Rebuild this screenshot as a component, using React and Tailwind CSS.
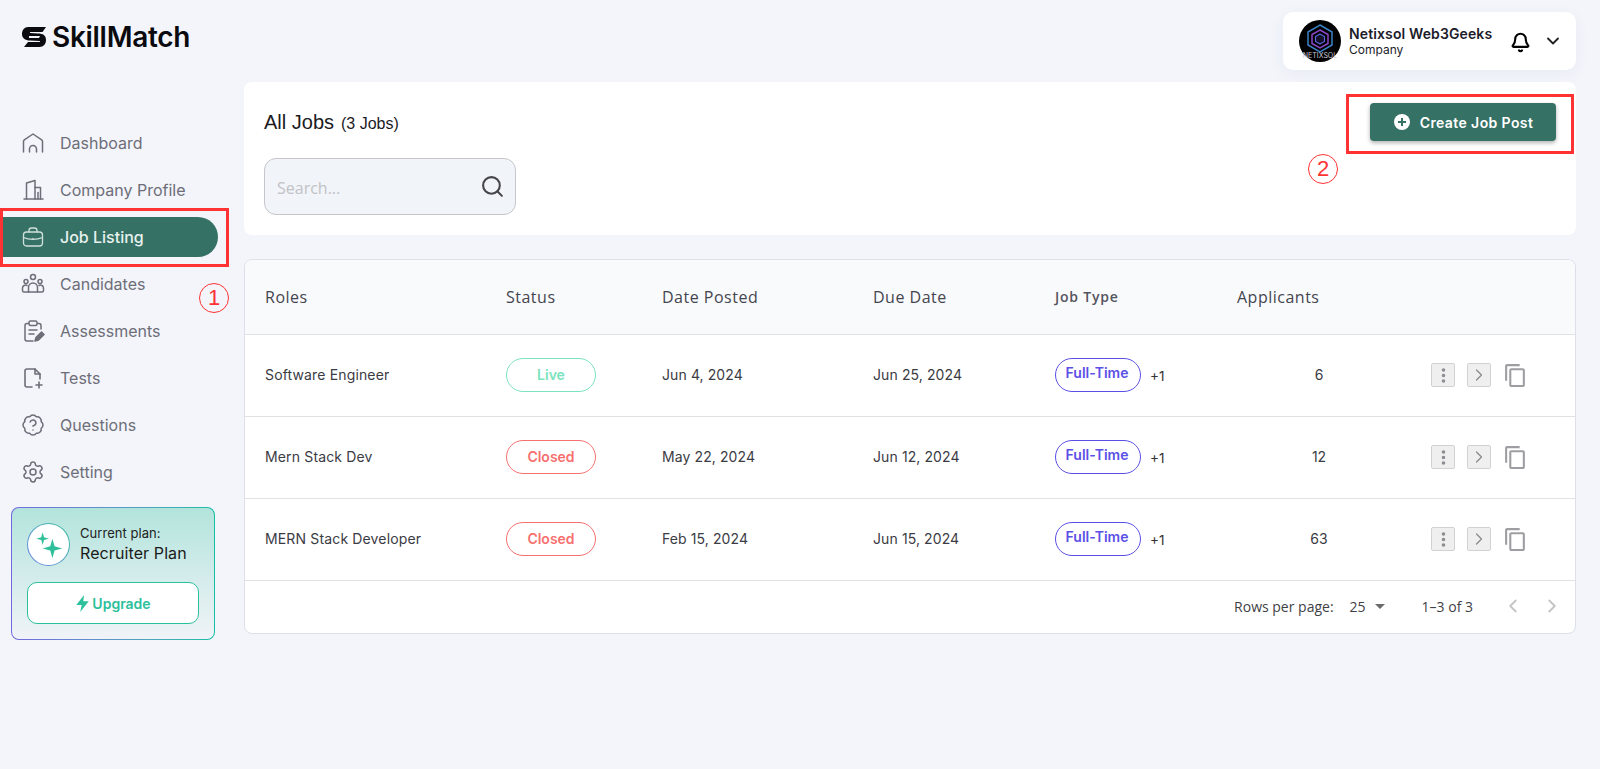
import React from "react";
import { Bell, ChevronDown, Search, ChevronLeft, ChevronRight, Settings, MoreVertical, BadgeQuestionMark } from "lucide-react";

const inter = "font-['Inter',sans-serif]";
const open = "font-['Open_Sans',sans-serif]";

const S = ({ children, className = "", w = 1.5 }) => (
  <svg viewBox="0 0 24 24" fill="none" stroke="currentColor" strokeWidth={w} strokeLinecap="round" strokeLinejoin="round" className={"w-6 h-6 shrink-0 " + className}>{children}</svg>
);

const HomeI = () => <S><path d="M2.500 21V10.500c0-.7.300-1.300.8-1.700L12 3l8.700 5.800c.5.400.8 1 .8 1.700V21" /><path d="M8.500 21v-3a3.500 3.500 0 0 1 7 0v3" /></S>;
const BuildI = () => <S><path d="M3 21h19" /><path d="M5.500 21V5l8.500-2.500V21" /><path d="M14 9.500h5.500V21" /><path d="M17 14.500V21" /></S>;
const CaseI = () => <S w={1.3} className="text-[#cfe0db]"><rect x="2.500" y="7" width="19" height="14" rx="3" /><path d="M8 7V5.500A2.500 2.500 0 0 1 10.500 3h3A2.500 2.500 0 0 1 16 5.500V7" /><path d="M2.500 12.500c5.500 2.500 13.500 2.500 19 0" /><path d="M12 13.500v.5" /></S>;
const PeopleI = () => <S><circle cx="12" cy="5" r="2.500" /><circle cx="5" cy="9.500" r="2" /><circle cx="19" cy="9.500" r="2" /><path d="M7.500 20v-4.500a4.500 4.500 0 0 1 9 0V20z" /><path d="M7.500 20H3a1.500 1.500 0 0 1-1.500-1.500V16a3 3 0 0 1 4.500-2.500" /><path d="M16.500 20H21a1.500 1.500 0 0 0 1.500-1.500V16a3 3 0 0 0-4.500-2.500" /></S>;
const ClipI = () => <S><path d="M16.500 4.500H18a2 2 0 0 1 2 2V10" /><path d="M7.500 4.500H6a2 2 0 0 0-2 2V20a2 2 0 0 0 2 2h6" /><rect x="8" y="2" width="8" height="4.500" rx="1.500" /><path d="M8 11h8M8 15h5" /><path d="M14 22l1-3.500 5.500-5.500 2.500 2.500-5.500 5.500z" fill="currentColor" /></S>;
const FileI = () => <S w={1.6}><path d="M11 21H6a2 2 0 0 1-2-2V5a2 2 0 0 1 2-2h8l5 5v5" /><path d="M14 3v5h5" /><path d="M18 16v6M15 19h6" /></S>;

const nav = [
  ["Dashboard", <HomeI />],
  ["Company Profile", <BuildI />],
  ["Job Listing", <CaseI />, true],
  ["Candidates", <PeopleI />],
  ["Assessments", <ClipI />],
  ["Tests", <FileI />],
  ["Questions", <BadgeQuestionMark size={24} strokeWidth={1.5} className="shrink-0" />],
  ["Setting", <Settings size={24} strokeWidth={1.5} className="shrink-0" />],
];

const rows = [
  ["Software Engineer", "Live", "Jun 4, 2024", "Jun 25, 2024", "6"],
  ["Mern Stack Dev", "Closed", "May 22, 2024", "Jun 12, 2024", "12"],
  ["MERN Stack Developer", "Closed", "Feb 15, 2024", "Jun 15, 2024", "63"],
];

const Logo = () => (
  <svg viewBox="0 0 24 20" className="w-6 h-5 shrink-0">
    <path fill="#0b0b0f" d="M6 0h18l-3.500 5H8.500c-.6 0-.8.700-.3 1L16 6.500c5 0 8 2 8 6.500 0 4-2.500 7-6.500 7H2l4-5h11.500c.7 0 .8-.9.200-1L8 13.500C3 13.500 0 11 0 7c0-4 2.500-7 6-7z" />
    <path fill="#f3f5fb" d="M7 9h11l-1 2H7z" />
  </svg>
);

const Avatar = () => (
  <svg viewBox="0 0 42 42" className="w-[42px] h-[42px] shrink-0">
    <circle cx="21" cy="21" r="21" fill="#000" />
    <path d="M21 5l12 7v13l-12 7-12-7V12z" fill="none" stroke="#3b82c4" strokeWidth="1.500" />
    <path d="M21 10l8 4.500v9L21 28l-8-4.500v-9z" fill="none" stroke="#8b46c8" strokeWidth="1.500" />
    <path d="M21 14l4.500 2.500v5L21 24l-4.500-2.500v-5z" fill="#16122a" stroke="#5a63d8" strokeWidth="1.200" />
    <text x="21" y="38" textAnchor="middle" fontSize="7" fill="#c9c9d6" fontFamily="Inter, sans-serif">NETIXSOL</text>
  </svg>
);

const Sparkles = () => (
  <svg viewBox="0 0 42 42" className="w-[41px] h-[41px]">
    <path fill="#2fbf9a" d="M15 8.500l1.400 5.100 5.100 1.400-5.100 1.400-1.400 5.100-1.400-5.100L8.500 15l5.100-1.400z" />
    <path fill="#2fbf9a" d="M25 15l2.200 7.800L35 25l-7.800 2.200L25 35l-2.200-7.800L15 25l7.800-2.200z" />
  </svg>
);

const Ann = ({ n, className }) => (
  <div className={"absolute w-[30px] h-[30px] rounded-full border border-[#ff3333] text-[#ff3333] flex items-center justify-center text-[22px] leading-none font-['Liberation_Sans',sans-serif] " + className}>{n}</div>
);

export default function App() {
  return (
    <div className={"relative w-full h-[769px] bg-[#f3f5fb] overflow-hidden " + inter}>
      <header className="flex justify-between items-start pt-3 pr-6 pl-[22px] h-[82px]">
        <div className="flex items-center gap-[6px] h-[50px]">
          <Logo />
          <span className="text-[28px] font-semibold tracking-[-0.3px] text-[#0b0b0f] leading-none">SkillMatch</span>
        </div>
        <div className="w-[293px] h-[58px] bg-white rounded-[10px] shadow-[0_4px_16px_rgba(60,60,100,0.05)] flex items-center pl-4 pr-[13px]">
          <Avatar />
          <div className="ml-2 flex-1 pb-[2px]">
            <div className="text-[14px] font-semibold tracking-[0.12px] leading-[18px] text-[#1c1c2b] whitespace-nowrap">Netixsol Web3Geeks</div>
            <div className="text-[12px] leading-[13px] text-[#1c1c2b]">Company</div>
          </div>
          <Bell size={21} strokeWidth={2.4} className="text-black mt-[2px]" />
          <ChevronDown size={20} strokeWidth={2.2} className="text-[#222] ml-3" />
        </div>
      </header>

      <div className="flex">
        <aside className="w-[244px] shrink-0 pt-[41px]">
          <nav className="flex flex-col gap-[7px] pr-[26px]">
            {nav.map(([label, icon, active]) => (
              <div key={label} className={"h-10 flex items-center gap-[15px] pl-[21px] rounded-r-[20px] text-[16px] " + (active ? "bg-[#367165] text-[#e8f2ef] font-medium" : "text-[#6e6e78]")}>
                {icon}
                <span>{label}</span>
              </div>
            ))}
          </nav>
          <div className="ml-[11px] mt-[15px] w-[204px] h-[133px] rounded-[8px] p-px bg-gradient-to-r from-[#7367e0] to-[#12bfa5]">
            <div className="w-full h-full rounded-[7px] bg-gradient-to-b from-[#b2e4dc] to-[#f0f3f8] px-[15px] pt-[15px]">
              <div className="flex items-center gap-[10px]">
                <div className="w-[43px] h-[43px] rounded-full p-px bg-gradient-to-tr from-[#6d7fe8] to-[#2fbf9a] shrink-0">
                  <div className="w-full h-full rounded-full bg-white flex items-center justify-center">
                    <Sparkles />
                  </div>
                </div>
                <div>
                  <div className="text-[13px] tracking-[0.05px] leading-[17px] text-[#222]">Current plan:</div>
                  <div className="text-[16px] tracking-[0.1px] leading-[22px] text-[#1a1a1a]">Recruiter Plan</div>
                </div>
              </div>
              <div className="mt-4 h-[42px] rounded-[10px] bg-white border border-[#2cc09c] flex items-center justify-center gap-[2px] text-[#2cc09c] text-[14px] font-semibold">
                <svg viewBox="0 0 24 24" className="w-[15px] h-[17px] scale-125" fill="currentColor"><path d="M14 1 4 14h7l-2 9 11-14h-7z" /></svg>
                Upgrade
              </div>
            </div>
          </div>
        </aside>

        <main className="w-[1332px] shrink-0">
          <section className="h-[153px] bg-white rounded-[8px] px-[21px] flex justify-between">
            <div>
              <h1 className="mt-[28px] ml-[-1px] h-6 flex items-baseline gap-[7px] text-[#1b1b1f] font-['Liberation_Sans',sans-serif] text-[20px] leading-6">
                All Jobs <span className="text-[16px]">(3 Jobs)</span>
              </h1>
              <div className="mt-6 w-[252px] h-[57px] ml-[-1px] bg-[#f1f4f8] border border-[#c6c6ca] rounded-[12px] flex items-center justify-between pl-3 pr-[10px]">
                <span className={"text-[16px] pt-[2px] text-[#c2c2c6] " + open}>Search...</span>
                <Search size={25} strokeWidth={2} className="text-[#45454d]" />
              </div>
            </div>
            <button className="mt-[21px] mr-[-1px] w-[186px] h-[38px] pl-px bg-[#367165] rounded-[4px] shadow-[0_2px_4px_rgba(0,0,0,0.3)] text-white text-[14px] font-semibold tracking-[0.4px] flex items-center justify-center gap-[10px]">
              <svg viewBox="0 0 16 16" className="w-4 h-4"><circle cx="8" cy="8" r="8" fill="#fff" /><path d="M8 4v8M4 8h8" stroke="#367165" strokeWidth="2" /></svg>
              Create Job Post
            </button>
          </section>

          <section className="mt-6 h-[375px] bg-white rounded-[8px] border border-[#dde0ea] overflow-hidden">
            <table className="w-full table-fixed border-collapse">
              <colgroup>
                <col className="w-[241px]" /><col className="w-[156px]" /><col className="w-[211px]" /><col className="w-[182px]" /><col className="w-[182px]" /><col className="w-[160px]" /><col />
              </colgroup>
              <thead>
                <tr className={"h-[74px] bg-[#f9fafc] border-b border-[#e2e2e6] text-left text-[16px] text-[#45454f] tracking-[0.5px] " + open}>
                  <th className="pl-5 font-medium">Roles</th>
                  <th className="pl-5 font-medium">Status</th>
                  <th className="pl-5 font-medium">Date Posted</th>
                  <th className="pl-5 font-medium">Due Date</th>
                  <th className="pl-5 font-semibold text-[14px] tracking-[0.8px] text-[#55555f]">Job Type</th>
                  <th className="pl-5 font-medium">Applicants</th>
                  <th />
                </tr>
              </thead>
              <tbody>
                {rows.map(([role, status, posted, due, count]) => (
                  <tr key={role} className="h-[82px] border-b border-[#e2e2e6] text-[14px] text-[#3b3b44]">
                    <td className="pl-5 pb-[2px] tracking-[0.15px]">{role}</td>
                    <td className="pl-5">
                      <span className={"w-[90px] h-[34px] pb-[2px] rounded-full border flex items-center justify-center font-semibold text-[14px] " + (status === "Live" ? "border-[#7be3bd] text-[#7be3bd]" : "border-[#f77070] text-[#f77070]")}>{status}</span>
                    </td>
                    <td className="pl-5 pb-[2px] tracking-[0.1px]">{posted}</td>
                    <td className="pl-5 pb-[2px] tracking-[0.1px]">{due}</td>
                    <td className="pl-5">
                      <div className="flex items-center gap-[9px]">
                        <span className="w-[86px] h-[34px] pr-[2px] rounded-full border border-[#5b50e6] text-[#5b50e6] font-semibold flex items-center justify-center pb-[5px]">Full-Time</span>
                        <span className="text-[13.500px] text-[#333] pt-[2px]">+1</span>
                      </div>
                    </td>
                    <td className="pl-[86px] pb-[2px]"><span className="inline-block w-[32px] text-center">{count}</span></td>
                    <td>
                      <div className="flex items-center">
                        <span className="w-6 h-6 bg-[#efefef] border border-[#d2d2d2] rounded-[2px] flex items-center justify-center text-[#8a8a8f] ml-[54px]">
                          <MoreVertical size={19} strokeWidth={2.5} />
                        </span>
                        <span className="w-6 h-6 bg-[#efefef] border border-[#d2d2d2] rounded-[2px] flex items-center justify-center text-[#8a8a8f] ml-3">
                          <ChevronRight size={20} strokeWidth={1.5} />
                        </span>
                        <svg viewBox="0 0 24 24" className="w-[25px] h-[25px] ml-[12px] text-[#9e9ea2]" fill="currentColor"><path d="M16 1H4c-1.100 0-2 .9-2 2v14h2V3h12V1zm3 4H8c-1.100 0-2 .9-2 2v14c0 1.100.9 2 2 2h11c1.100 0 2-.9 2-2V7c0-1.100-.9-2-2-2zm0 16H8V7h11v14z" /></svg>
                      </div>
                    </td>
                  </tr>
                ))}
              </tbody>
            </table>
            <div className={"h-[51px] flex items-center justify-end text-[14px] text-[#3f3f46] pr-[12px] " + open}>
              <span>Rows per page:</span>
              <span className="ml-4">25</span>
              <svg viewBox="0 0 10 5" className="w-[10px] h-[5px] ml-[9px]"><path d="M0 0h10L5 5z" fill="#6b6b6b" /></svg>
              <span className="ml-[37px]">1–3 of 3</span>
              <ChevronLeft size={22} strokeWidth={2} className="text-[#c4c4c4] ml-[29px]" />
              <ChevronRight size={22} strokeWidth={2} className="text-[#c4c4c4] ml-[17px]" />
            </div>
          </section>
        </main>
      </div>

      <div className="absolute left-0 top-[208px] w-[229px] h-[59px] border-[3px] border-[#ff3333]" />
      <div className="absolute left-[1346px] top-[94px] w-[228px] h-[60px] border-[3px] border-[#ff3333]" />
      <Ann n="1" className="left-[199px] top-[283px]" />
      <Ann n="2" className="left-[1308px] top-[154px]" />
    </div>
  );
}
